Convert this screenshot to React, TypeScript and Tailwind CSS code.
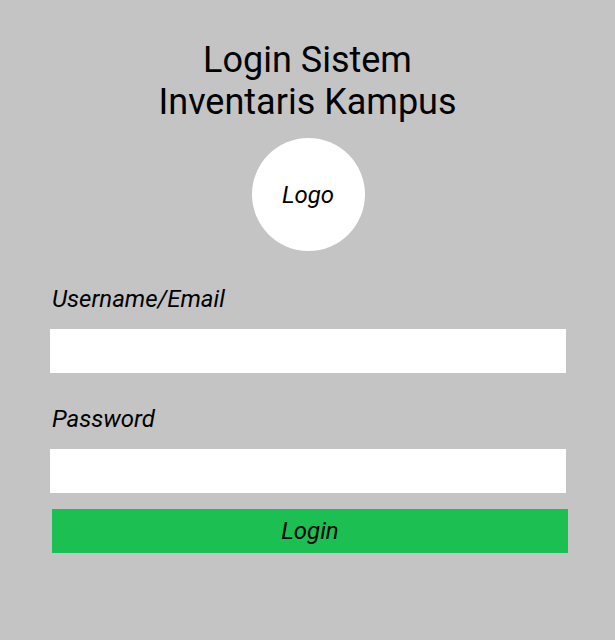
export default function App() {
  return (
    <div className="min-h-screen w-full bg-[#c4c4c4] font-['Roboto',sans-serif] text-black">
      {/* Title */}
      <div className="pt-[39px]">
        <h1 className="text-center text-[36px] leading-[42px] font-normal">
          Login Sistem
          <br />
          Inventaris Kampus
        </h1>
      </div>

      {/* Logo */}
      <div className="mt-[15px] flex justify-center">
        <div className="ml-[1px] flex h-[113px] w-[113px] items-center justify-center rounded-full bg-white">
          <span className="text-[24px] italic">Logo</span>
        </div>
      </div>

      {/* Form */}
      <form className="mt-[34px] flex flex-col">
        <label htmlFor="username" className="ml-[52px] text-[24px] leading-[28px] italic">
          Username/Email
        </label>
        <input
          id="username"
          type="text"
          className="ml-[50px] mt-[16px] h-[44px] w-[516px] bg-white px-3 outline-none"
        />

        <label htmlFor="password" className="ml-[52px] mt-[32px] text-[24px] leading-[28px] italic">
          Password
        </label>
        <input
          id="password"
          type="password"
          className="ml-[50px] mt-[16px] h-[44px] w-[516px] bg-white px-3 outline-none"
        />

        <button
          type="button"
          className="ml-[52px] mt-[16px] h-[44px] w-[516px] bg-[#1bbf52] text-[24px] italic"
        >
          Login
        </button>
      </form>
    </div>
  )
}
